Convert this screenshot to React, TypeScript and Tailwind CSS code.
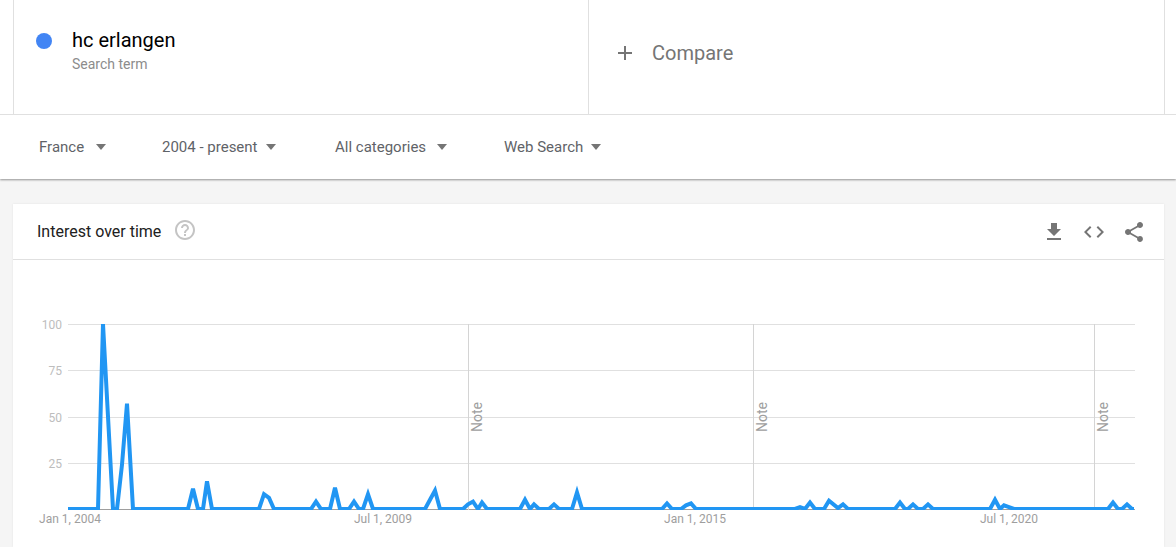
import { MdFileDownload, MdCode, MdShare, MdHelpOutline, MdAdd } from "react-icons/md";

// [x, value] for each turn of the line; everything between sits on zero
const POINTS: [number, number][] = [
  [68, 0], [98, 0], [103, 100], [113, 0], [117, 0], [122, 24], [127, 57], [133, 0],
  [188, 0], [193, 11], [198, 0], [203, 0], [207, 15], [212, 0],
  [259, 0], [264, 8], [269, 6], [274, 0], [311, 0], [316, 4], [321, 0],
  [330, 0], [335, 11.5], [340, 0], [349, 0], [354, 4], [359, 0], [363, 0], [368, 8], [373, 0],
  [425, 0], [430, 5], [435, 10], [440, 0], [463, 0], [468, 2.5], [473, 4], [478, 0], [482, 3.5], [487, 0],
  [520, 0], [525, 5], [530, 0], [534, 2.5], [539, 0], [549, 0], [554, 2.5], [559, 0],
  [572, 0], [577, 9], [582, 0], [662, 0], [667, 3], [672, 0], [681, 0], [686, 2], [691, 3], [696, 0],
  [795, 0], [800, 1], [805, 0], [810, 3.5], [815, 0], [824, 0], [829, 4.5], [838, 0.5], [843, 2.5], [848, 0],
  [895, 0], [900, 3.5], [905, 0], [908, 0], [913, 2.5], [918, 0], [923, 0], [928, 2.5], [933, 0],
  [990, 0], [995, 5], [1000, 0], [1004, 2], [1009, 1], [1014, 0],
  [1108, 0], [1113, 3.5], [1118, 0], [1122, 0], [1127, 2.5], [1132, 0], [1134, 0],
];

const toY = (v: number) => 509 - v * 1.85;

const Filter = ({ label, className, gap }: { label: string; className: string; gap: string }) => (
  <div className={`flex items-center text-[15px] text-[#5f6368] ${className}`}>
    <span>{label}</span>
    <span className={`h-0 w-0 border-x-[5.5px] border-t-[6px] border-x-transparent border-t-[#757575] ${gap}`} />
  </div>
);

const Chart = () => (
  <svg width="1176" height="287" viewBox="0 260 1176 287" className="-ml-[13px] block">
    <defs>
      <clipPath id="plot">
        <rect x="60" y="324" width="1076" height="186" />
      </clipPath>
    </defs>
    {[324.5, 370.5, 417.5, 463.5].map(y => (
      <line key={y} x1="68" x2="1135" y1={y} y2={y} stroke="#e0e0e0" />
    ))}
    <line x1="68" x2="1135" y1="509.5" y2="509.5" stroke="#9e9e9e" />
    {[468.5, 753.5, 1094.5].map(x => (
      <g key={x}>
        <line x1={x} x2={x} y1="324" y2="510" stroke="#d4d4d4" />
        <text
          transform={`translate(${x + 13} 432) rotate(-90)`}
          fontSize="14"
          fill="#9e9e9e"
        >
          Note
        </text>
      </g>
    ))}
    {[
      ["100", 329],
      ["75", 375],
      ["50", 421.5],
      ["25", 467.5],
    ].map(([t, y]) => (
      <text key={t} x="62" y={y} fontSize="12" fill="#bdbdbd" textAnchor="end">
        {t}
      </text>
    ))}
    {[
      ["Jan 1, 2004", 70],
      ["Jul 1, 2009", 383],
      ["Jan 1, 2015", 695],
      ["Jul 1, 2020", 1009],
    ].map(([t, x]) => (
      <text key={t} x={x} y="523" fontSize="12" fill="#9e9e9e" textAnchor="middle">
        {t}
      </text>
    ))}
    <polyline
      clipPath="url(#plot)"
      points={POINTS.map(([x, v]) => `${x},${toY(v)}`).join(" ")}
      fill="none"
      stroke="#2196f3"
      strokeWidth="4"
      strokeLinejoin="miter"
    />
  </svg>
);

export default function App() {
  return (
    <div className="h-[547px] w-[1176px] overflow-hidden bg-[#f5f5f5] font-['Roboto',sans-serif]">
      <div className="bg-white shadow-[0_1px_2px_rgba(0,0,0,0.4)]">
        {/* search term + compare */}
        <div className="h-[115px] border-b border-[#e0e0e0] pl-[13px] pr-[11px]">
          <div className="flex h-full border-x border-[#e0e0e0]">
            <div className="flex h-full w-[575px] border-r border-[#e0e0e0] pl-[22px] pt-[28px]">
              <span className="mt-[5px] h-[16px] w-[16px] rounded-full bg-[#4285f4]" />
              <div className="ml-[20px]">
                <div className="text-[20px] leading-[24px] text-black">hc erlangen</div>
                <div className="mt-[3px] text-[14px] leading-[18px] text-[#8c8c8c]">Search term</div>
              </div>
            </div>
            <div className="flex items-start pl-[24px] pt-[41px] text-[#757575]">
              <MdAdd size={24} />
              <span className="ml-[15px] text-[20px] leading-[24px]">Compare</span>
            </div>
          </div>
        </div>

        {/* filters */}
        <div className="flex h-[64px] items-center pl-[39px]">
          <Filter label="France" className="w-[123px]" gap="ml-[12px]" />
          <Filter label="2004 - present" className="w-[173px]" gap="ml-[8px]" />
          <Filter label="All categories" className="w-[169px]" gap="ml-[11px]" />
          <Filter label="Web Search" className="w-[110px]" gap="ml-[8px]" />
        </div>
      </div>

      {/* interest over time */}
      <div className="ml-[13px] mt-[25px] w-[1151px] bg-white shadow-[0_0_2px_rgba(0,0,0,0.08)]">
        <div className="flex h-[56px] items-center justify-between border-b border-[#e0e0e0] pl-[24px] pr-[18px]">
          <div className="flex items-center">
            <span className="text-[16px] text-[#212121]">Interest over time</span>
            <MdHelpOutline size={24} className="ml-[12px] -mt-[3px] text-[#c4c4c4]" />
          </div>
          <div className="flex items-center gap-[16px] text-[#757575]">
            <MdFileDownload size={24} />
            <MdCode size={24} />
            <MdShare size={24} />
          </div>
        </div>
        <Chart />
      </div>
    </div>
  );
}
